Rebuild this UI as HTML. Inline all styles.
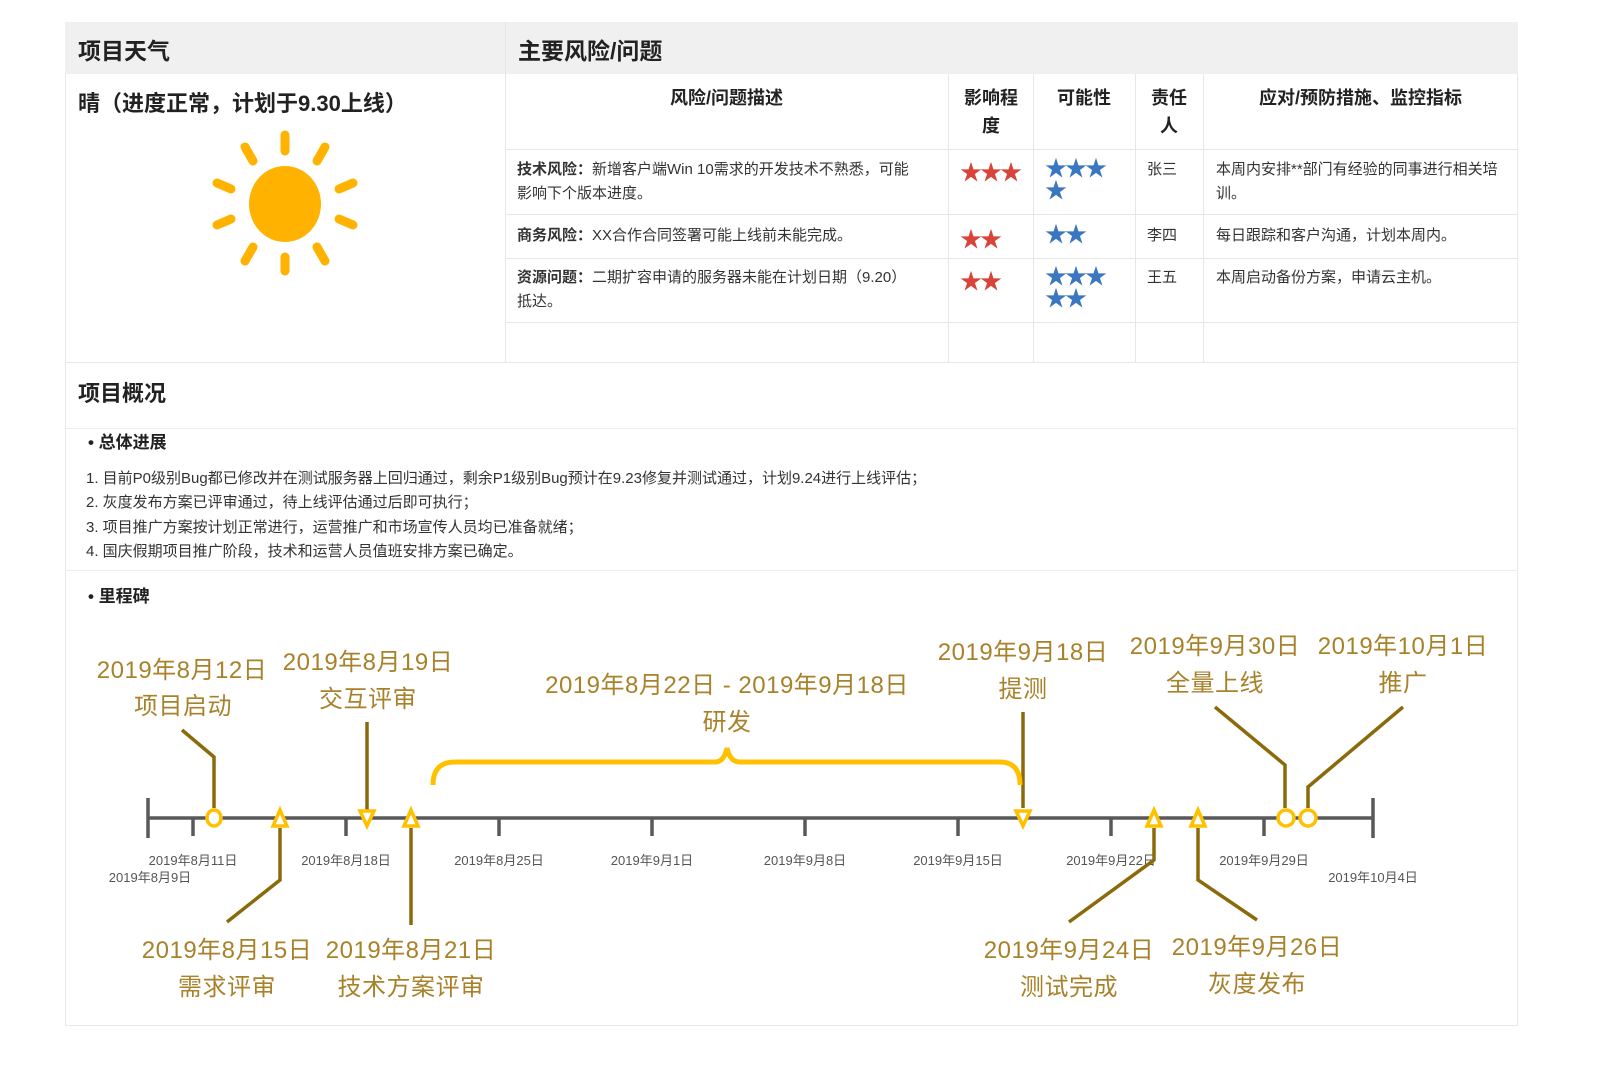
<!DOCTYPE html>
<html><head><meta charset="utf-8">
<style>
body{margin:0;width:1616px;height:1080px;background:#fff;font-family:"Liberation Sans","Noto Sans CJK SC",sans-serif;color:#333;position:relative;overflow:hidden}
.a{position:absolute}
.b{font-weight:bold;color:#222}
.vl{position:absolute;width:1px;background:#e6e6e6}
.hl{position:absolute;height:1px;background:#e6e6e6}
.th{position:absolute;font-weight:bold;font-size:18px;color:#222;text-align:center;line-height:28px}
.td{position:absolute;font-size:15px;color:#333;line-height:24px}
.rs{color:#d9443a;font-size:22px;letter-spacing:-2px}
.bs{color:#3a77c0;font-size:22px;letter-spacing:-2px;line-height:22px}
</style></head><body>
<div class="a" style="left:65px;top:22px;width:1453px;height:1004px;border:1px solid #e8e8e8;box-sizing:border-box"></div>
<div class="a" style="left:65px;top:22px;width:1453px;height:52px;background:#f0f0f0"></div>
<div class="a b" style="left:78px;top:32px;font-size:23px">项目天气</div>
<div class="a b" style="left:518px;top:32px;font-size:23px">主要风险/问题</div>
<div class="vl" style="left:505px;top:22px;height:340px"></div>
<div class="a b" style="left:78px;top:86px;font-size:22px">晴（进度正常，计划于9.30上线）</div>
<svg class="a" style="left:205px;top:125px" width="160" height="160" viewBox="0 0 160 160">
<ellipse cx="80" cy="79" rx="36" ry="38" fill="#ffb300"/>
<g stroke="#ffb300" stroke-width="9" stroke-linecap="round">
<line x1="80" y1="10" x2="80" y2="26"/><line x1="80" y1="132" x2="80" y2="146"/>
<line x1="40" y1="22" x2="48" y2="36"/><line x1="120" y1="22" x2="112" y2="36"/>
<line x1="40" y1="136" x2="48" y2="122"/><line x1="120" y1="136" x2="112" y2="122"/>
<line x1="12" y1="58" x2="26" y2="64"/><line x1="148" y1="58" x2="134" y2="64"/>
<line x1="12" y1="100" x2="26" y2="94"/><line x1="148" y1="100" x2="134" y2="94"/>
</g></svg>
<div class="hl" style="left:505px;top:149px;width:1013px"></div>
<div class="hl" style="left:505px;top:214px;width:1013px"></div>
<div class="hl" style="left:505px;top:258px;width:1013px"></div>
<div class="hl" style="left:505px;top:322px;width:1013px"></div>
<div class="vl" style="left:948px;top:74px;height:288px"></div>
<div class="vl" style="left:1033px;top:74px;height:288px"></div>
<div class="vl" style="left:1135px;top:74px;height:288px"></div>
<div class="vl" style="left:1203px;top:74px;height:288px"></div>
<div class="hl" style="left:65px;top:362px;width:1453px"></div>
<div class="th" style="left:505px;top:84px;width:443px">风险/问题描述</div>
<div class="th" style="left:952px;top:84px;width:78px">影响程<br>度</div>
<div class="th" style="left:1033px;top:84px;width:102px">可能性</div>
<div class="th" style="left:1135px;top:84px;width:68px">责任<br>人</div>
<div class="th" style="left:1203px;top:84px;width:315px">应对/预防措施、监控指标</div>
<div class="td" style="left:517px;top:158px;width:405px"><b>技术风险：</b>新增客户端Win 10需求的开发技术不熟悉，可能影响下个版本进度。</div>
<div class="td" style="left:517px;top:224px"><b>商务风险：</b>XX合作合同签署可能上线前未能完成。</div>
<div class="td" style="left:517px;top:266px;width:390px"><b>资源问题：</b>二期扩容申请的服务器未能在计划日期（9.20）抵达。</div>
<div class="a rs" style="left:960px;top:155px">★★★</div>
<div class="a rs" style="left:960px;top:222px">★★</div>
<div class="a rs" style="left:960px;top:264px">★★</div>
<div class="a bs" style="left:1045px;top:158px;width:66px">★★★<br>★</div>
<div class="a bs" style="left:1045px;top:224px">★★</div>
<div class="a bs" style="left:1045px;top:266px;width:66px">★★★<br>★★</div>
<div class="td" style="left:1147px;top:158px">张三</div>
<div class="td" style="left:1147px;top:224px">李四</div>
<div class="td" style="left:1147px;top:266px">王五</div>
<div class="td" style="left:1216px;top:158px;width:290px">本周内安排**部门有经验的同事进行相关培训。</div>
<div class="td" style="left:1216px;top:224px">每日跟踪和客户沟通，计划本周内。</div>
<div class="td" style="left:1216px;top:266px">本周启动备份方案，申请云主机。</div>
<div class="a b" style="left:78px;top:376px;font-size:22px">项目概况</div>
<div class="hl" style="left:65px;top:428px;width:1453px;background:#eee"></div>
<div class="a b" style="left:88px;top:428px;font-size:17px">• 总体进展</div>
<div class="a" style="left:86px;top:467px;font-size:15px;line-height:24.3px;color:#333">1. 目前P0级别Bug都已修改并在测试服务器上回归通过，剩余P1级别Bug预计在9.23修复并测试通过，计划9.24进行上线评估；<br>2. 灰度发布方案已评审通过，待上线评估通过后即可执行；<br>3. 项目推广方案按计划正常进行，运营推广和市场宣传人员均已准备就绪；<br>4. 国庆假期项目推广阶段，技术和运营人员值班安排方案已确定。</div>
<div class="hl" style="left:65px;top:570px;width:1453px;background:#eee"></div>
<div class="a b" style="left:88px;top:582px;font-size:17px">• 里程碑</div>
<svg class="a" style="left:0;top:0" width="1616" height="1080" viewBox="0 0 1616 1080">
<g stroke="#595959" stroke-width="3.5" fill="none">
<line x1="148" y1="818" x2="1373" y2="818"/>
<line x1="148" y1="798" x2="148" y2="838"/><line x1="1373" y1="798" x2="1373" y2="838"/>
<line x1="193" y1="818" x2="193" y2="836"/><line x1="346" y1="818" x2="346" y2="836"/>
<line x1="499" y1="818" x2="499" y2="836"/><line x1="652" y1="818" x2="652" y2="836"/>
<line x1="805" y1="818" x2="805" y2="836"/><line x1="958" y1="818" x2="958" y2="836"/>
<line x1="1111" y1="818" x2="1111" y2="836"/><line x1="1264" y1="818" x2="1264" y2="836"/>
</g>
<g font-size="13" fill="#555" text-anchor="middle">
<text x="193" y="865">2019年8月11日</text><text x="346" y="865">2019年8月18日</text>
<text x="499" y="865">2019年8月25日</text><text x="652" y="865">2019年9月1日</text>
<text x="805" y="865">2019年9月8日</text><text x="958" y="865">2019年9月15日</text>
<text x="1111" y="865">2019年9月22日</text><text x="1264" y="865">2019年9月29日</text>
<text x="150" y="882">2019年8月9日</text><text x="1373" y="882">2019年10月4日</text>
</g>
<g stroke="#8a6a0a" stroke-width="3.5" fill="none">
<polyline points="182,730 214,757 214,808"/>
<polyline points="367,722 367,810"/>
<polyline points="1023,712 1023,808"/>
<polyline points="1215,707 1285,765 1285,808"/>
<polyline points="1403,707 1308,787 1308,808"/>
<polyline points="280,828 280,880 227,922"/>
<polyline points="411,828 411,925"/>
<polyline points="1154,828 1154,860 1069,922"/>
<polyline points="1198,828 1198,880 1257,920"/>
</g>
<path d="M433,785 Q433,762 455,762 L715,762 Q724,762 727,748 Q730,762 740,762 L1000,762 Q1020,762 1020,785" stroke="#ffc000" stroke-width="5" fill="none"/>
<g stroke="#ffc000" stroke-width="3.5" fill="#fff">
<ellipse cx="214" cy="818" rx="7" ry="8"/>
<ellipse cx="1286" cy="818" rx="8" ry="8"/>
<ellipse cx="1308" cy="818" rx="8" ry="8"/>
<polygon points="280,810 273,826 287,826"/>
<polygon points="411,810 404,826 418,826"/>
<polygon points="1154,810 1147,826 1161,826"/>
<polygon points="1198,810 1191,826 1205,826"/>
<polygon points="367,826 360,811 374,811"/>
<polygon points="1023,826 1016,811 1030,811"/>
</g>
<g font-size="24" fill="#a8822a" text-anchor="middle" letter-spacing="0.5">
<text x="182" y="678">2019年8月12日</text><text x="183" y="714">项目启动</text>
<text x="368" y="670">2019年8月19日</text><text x="368" y="707">交互评审</text>
<text x="727" y="693">2019年8月22日 - 2019年9月18日</text><text x="727" y="730">研发</text>
<text x="1023" y="660">2019年9月18日</text><text x="1023" y="697">提测</text>
<text x="1215" y="654">2019年9月30日</text><text x="1215" y="691">全量上线</text>
<text x="1403" y="654">2019年10月1日</text><text x="1403" y="691">推广</text>
<text x="227" y="958">2019年8月15日</text><text x="227" y="995">需求评审</text>
<text x="411" y="958">2019年8月21日</text><text x="411" y="995">技术方案评审</text>
<text x="1069" y="958">2019年9月24日</text><text x="1069" y="995">测试完成</text>
<text x="1257" y="955">2019年9月26日</text><text x="1257" y="992">灰度发布</text>
</g>
</svg>
</body></html>
